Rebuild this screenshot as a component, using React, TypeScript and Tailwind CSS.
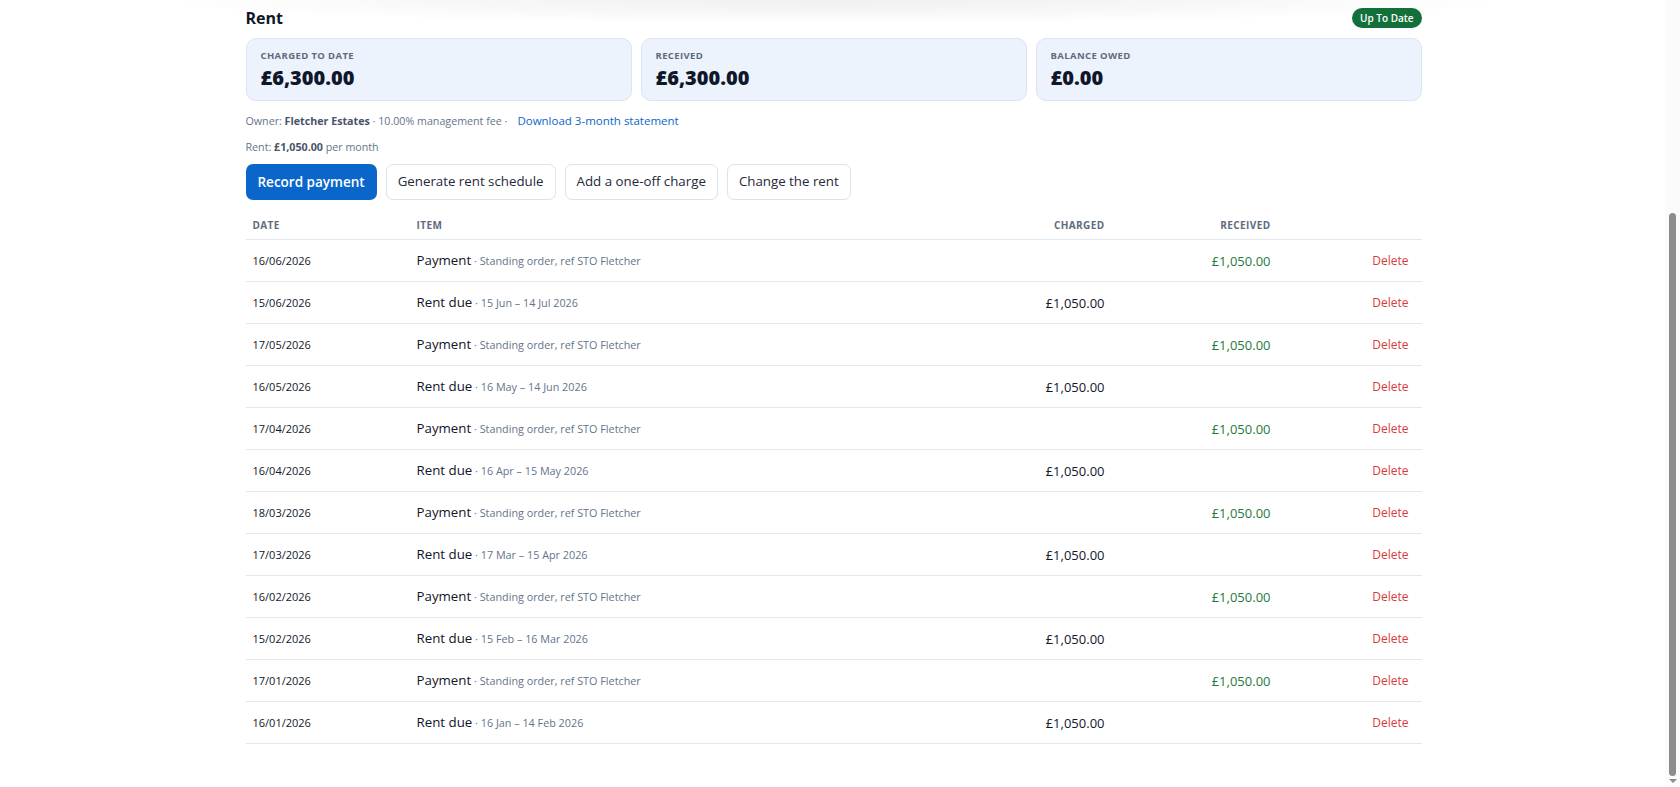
import React from "react";

type Row = { date: string; kind: "Payment" | "Rent due"; note: string; charged?: string; received?: string };

const rows: Row[] = [
  { date: "16/06/2026", kind: "Payment", note: "Standing order, ref STO Fletcher", received: "£1,050.00" },
  { date: "15/06/2026", kind: "Rent due", note: "15 Jun – 14 Jul 2026", charged: "£1,050.00" },
  { date: "17/05/2026", kind: "Payment", note: "Standing order, ref STO Fletcher", received: "£1,050.00" },
  { date: "16/05/2026", kind: "Rent due", note: "16 May – 14 Jun 2026", charged: "£1,050.00" },
  { date: "17/04/2026", kind: "Payment", note: "Standing order, ref STO Fletcher", received: "£1,050.00" },
  { date: "16/04/2026", kind: "Rent due", note: "16 Apr – 15 May 2026", charged: "£1,050.00" },
  { date: "18/03/2026", kind: "Payment", note: "Standing order, ref STO Fletcher", received: "£1,050.00" },
  { date: "17/03/2026", kind: "Rent due", note: "17 Mar – 15 Apr 2026", charged: "£1,050.00" },
  { date: "16/02/2026", kind: "Payment", note: "Standing order, ref STO Fletcher", received: "£1,050.00" },
  { date: "15/02/2026", kind: "Rent due", note: "15 Feb – 16 Mar 2026", charged: "£1,050.00" },
  { date: "17/01/2026", kind: "Payment", note: "Standing order, ref STO Fletcher", received: "£1,050.00" },
  { date: "16/01/2026", kind: "Rent due", note: "16 Jan – 14 Feb 2026", charged: "£1,050.00" },
];

function Stat({ label, value }: { label: string; value: string }) {
  return (
    <div className="rounded-[10px] border border-[#dbe4f1] bg-[#edf3fc] px-[14px] pt-[10px] pb-[9px]">
      <div className="text-[9.5px] leading-[14px] font-bold uppercase tracking-[0.04em] text-[#5f6b7c]">{label}</div>
      <div className="mt-[2px] text-[20px] leading-[26px] font-extrabold text-[#0f172a]">{value}</div>
    </div>
  );
}

const grid = "grid grid-cols-[163px_538px_166px_166px_143px]";

export default function App() {
  return (
    <div
      className="flex h-screen overflow-hidden bg-white"
      style={{ fontFamily: '"Open Sans", "Noto Sans", sans-serif' }}
    >
      <main className="relative flex-1 pl-[2px]">
        <div className="pointer-events-none absolute left-1/2 top-0 h-[22px] w-[1300px] -translate-x-1/2 bg-[radial-gradient(ellipse_at_top,#f0f0f0_0%,#f7f7f7_40%,transparent_75%)]" />
        <div className="relative mx-auto w-[1176px] pt-[8px]">
          <div className="flex h-[20px] items-center justify-between">
            <h2 className="text-[16px] font-bold leading-[20px] text-[#0f172a]">Rent</h2>
            <span className="rounded-full bg-[#14703a] px-[8px] text-[10px] font-semibold leading-[20px] text-white">Up To Date</span>
          </div>

          <div className="mt-[10px] grid grid-cols-3 gap-[9px]">
            <Stat label="Charged to date" value="£6,300.00" />
            <Stat label="Received" value="£6,300.00" />
            <Stat label="Balance owed" value="£0.00" />
          </div>

          <div className="mt-[12px] flex items-center text-[10.7px] leading-[16px] text-[#64748b]">
            <span>
              Owner: <span className="font-bold text-[#475569]">Fletcher Estates</span> · 10.00% management fee ·
            </span>
            <a className="ml-[10px] text-[11.5px] text-[#0b66c9]">Download 3-month statement</a>
          </div>

          <div className="mt-[10px] text-[10.7px] leading-[16px] text-[#64748b]">
            Rent: <span className="font-bold text-[#475569]">£1,050.00</span> per month
          </div>

          <div className="mt-[9px] flex gap-[9px]">
            <button className="h-[36px] rounded-[7px] bg-[#0b66cc] px-[12px] text-[13.5px] font-semibold text-white">Record payment</button>
            <button className="h-[36px] rounded-[7px] border border-[#dbe3ee] bg-white px-[11px] text-[13.3px] text-[#1e293b]">Generate rent schedule</button>
            <button className="h-[36px] rounded-[7px] border border-[#dbe3ee] bg-white px-[11px] text-[13.3px] text-[#1e293b]">Add a one-off charge</button>
            <button className="h-[36px] rounded-[7px] border border-[#dbe3ee] bg-white px-[11px] text-[13.3px] text-[#1e293b]">Change the rent</button>
          </div>

          <div className="mt-[10px]">
            <div className={`${grid} h-[30px] items-center border-b border-[#e2e8f0] text-[10px] font-bold uppercase leading-[14px] tracking-[0.04em] text-[#5f6b7c]`}>
              <div className="px-[7px]">Date</div>
              <div className="px-[8px]">Item</div>
              <div className="px-[8px] text-right">Charged</div>
              <div className="px-[8px] text-right">Received</div>
              <div />
            </div>
            {rows.map((r, i) => (
              <div key={i} className={`${grid} h-[42px] items-center border-b border-[#e2e8f0] leading-[18px]`}>
                <div className="px-[7px] text-[11px] font-medium text-[#0f172a]">{r.date}</div>
                <div className="px-[8px] text-[13.3px] text-[#0f172a]">
                  {r.kind}
                  <span className="text-[10.8px] text-[#64748b]"> · {r.note}</span>
                </div>
                <div className="px-[8px] text-right text-[13px] text-[#0f172a]">{r.charged ?? ""}</div>
                <div className="px-[8px] text-right text-[13px] text-[#1f7a3a]">{r.received ?? ""}</div>
                <div className="pr-[13px] text-right text-[12px] text-[#d73a3a]">
                  <span>Delete</span>
                </div>
              </div>
            ))}
          </div>
        </div>
      </main>
      <aside className="flex w-[15px] flex-col items-center bg-[#fbfbfb] pt-[213px] pb-[4px]">
        <div className="w-[7px] flex-1 rounded-full bg-[#8c8c8c]" />
        <div className="mt-[3px] h-0 w-0 border-x-[4px] border-t-[4px] border-x-transparent border-t-[#8c8c8c]" />
      </aside>
    </div>
  );
}
